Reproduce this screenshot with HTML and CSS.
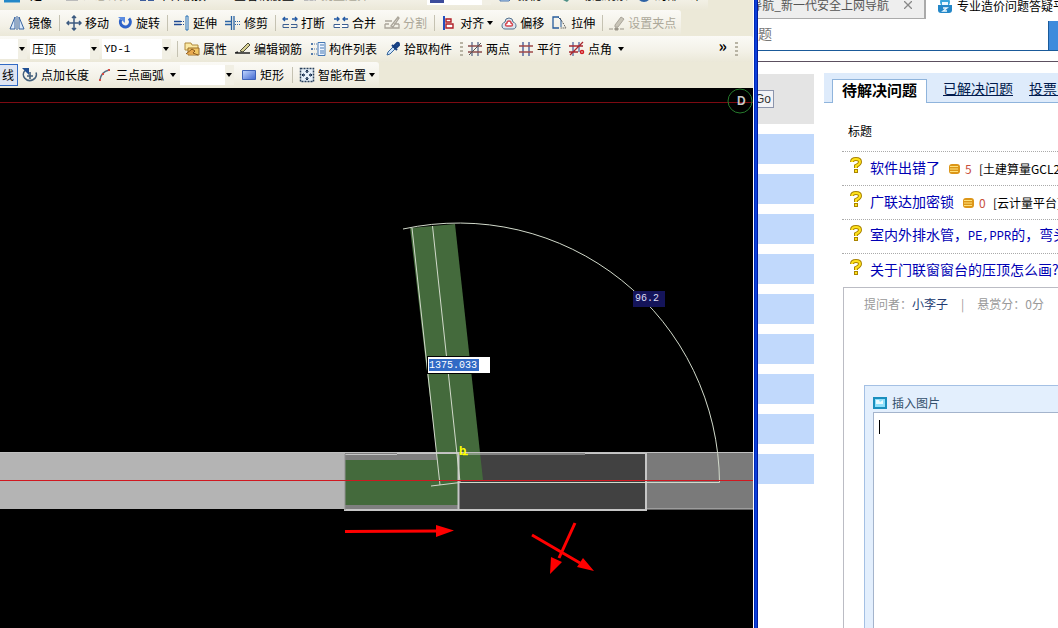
FILE: index.html
```html
<!DOCTYPE html>
<html lang="zh-CN">
<head>
<meta charset="utf-8">
<title>压顶绘制</title>
<link rel="stylesheet" href="styles.css">
</head>
<body>
<div class="desktop">
<main class="cad">
  <header class="toolbars">
    <div class="bar bar-top">
      <div class="band">
        <button class="tool"><svg class="ic" viewBox="0 0 16 16"><rect x="1" y="1" width="14" height="13" fill="#fff" stroke="#2387c8" stroke-width="3"/></svg></button>
        <button class="tool wide">定义</button>
        <button class="tool off"><svg class="ic" viewBox="0 0 16 16"><path d="M2 2h12v12H2z" fill="#bbb"/></svg>汇总计算</button>
        <button class="tool"><svg class="ic" viewBox="0 0 16 16"><path d="M1 3h6v11H1zM9 3h6v11H9z" fill="#3c5c9c"/><path d="M3 6h2v6H3zM11 6h2v6h-2z" fill="#fff"/></svg>平齐板顶</button>
        <button class="tool gapped">查看钢筋量</button>
        <button class="tool off"><svg class="ic" viewBox="0 0 16 16"><path d="M2 2h12v12H2z" fill="#bbb"/><path d="M5 5h2v9M10 5h2v9" stroke="#eee" fill="none"/></svg>批量选择</button>
        <label class="field top-field" aria-label="楼层"><select><option></option></select><span class="swatch"></span></label>
        <button class="tool"><svg class="ic" viewBox="0 0 16 16"><path d="M2 5l4-3h9v8l-4 4H2z" fill="#b7d3f0" stroke="#527ab0"/></svg>俯视</button>
        <button class="tool gapped-s"><svg class="ic" viewBox="0 0 16 16"><path d="M2 13l12-6-8 8z" fill="#4d8f86"/></svg>动态观察</button>
        <button class="tool"><svg class="ic" viewBox="0 0 16 16"><circle cx="8" cy="8" r="6" fill="#9cc4ec" stroke="#2e62a4" stroke-width="2"/></svg>局部三维</button>
      </div>
    </div>

    <div class="bar">
      <div class="band band-edit">
        <button class="tool"><svg class="ic" viewBox="0 0 16 16"><path d="M6 2v12H1zM10 2v12h5z" fill="#dceafa" stroke="#3763a0"/><path d="M8 1v14" stroke="#3763a0"/></svg>镜像</button>
        <i class="sep"></i>
        <button class="tool"><svg class="ic" viewBox="0 0 16 16"><path d="M8 1v14M1 8h14M6 3l2-2 2 2M6 13l2 2 2-2M3 6L1 8l2 2M13 6l2 2-2 2" fill="none" stroke="#3c5a80" stroke-width="1.5"/></svg>移动</button>
        <button class="tool"><svg class="ic" viewBox="0 0 16 16"><path d="M12 3.500a5 5 0 1 1-8 1" fill="none" stroke="#2d62c8" stroke-width="3"/><path d="M1 2h7v6z" fill="#5b8be0"/></svg>旋转</button>
        <i class="sep"></i>
        <button class="tool"><svg class="ic" viewBox="0 0 16 16"><path d="M0 6.500h7M0 9.500h7" stroke="#1f4a94" stroke-width="1.500"/><path d="M7 6.500h4M7 9.500h4" stroke="#1f4a94" stroke-dasharray="1 1"/><path d="M12 1h2v14h-2z" fill="#fff" stroke="#1f6ab0"/></svg>延伸</button>
        <button class="tool"><svg class="ic" viewBox="0 0 16 16"><path d="M0 6.500h6M0 9.500h6M9 1v14M6.500 1v14" stroke="#2b64a4" stroke-width="1.300"/><path d="M10 6.500h6M10 9.500h6" stroke="#2b64a4" stroke-dasharray="1 1"/></svg>修剪</button>
        <i class="sep"></i>
        <button class="tool"><svg class="ic" viewBox="0 0 16 16"><path d="M1 4h5M3 2L1 4l2 2M10 4h5M13 2l2 2-2 2" fill="none" stroke="#245aa4" stroke-width="1.400"/><path d="M6 9.500H1v3h5M10 9.500h5v3h-5M5 9.500h2M9 9.500h2M5 12.500h2M9 12.500h2" fill="none" stroke="#3c5f90"/></svg>打断</button>
        <button class="tool"><svg class="ic" viewBox="0 0 16 16"><path d="M1 4h5M4 2l2 2-2 2M10 4h5M12 2l-2 2 2 2" fill="none" stroke="#245aa4" stroke-width="1.400"/><path d="M7 9.500H1v3h6M9 9.500h6v3H9" fill="#fff" stroke="#3c5f90"/></svg>合并</button>
        <button class="tool off" disabled><svg class="ic" viewBox="0 0 16 16"><path d="M1 6h7M1 9v4h14V9M1 9h4M10 9h5M7 11l7-9 1 1-6 9z" fill="none" stroke="#aaa59a" stroke-width="1.300"/></svg>分割</button>
        <i class="sep"></i>
        <button class="tool"><svg class="ic" viewBox="0 0 16 16"><path d="M2 1h2v14H2z" fill="#2450c0"/><path d="M5 4h5v3H5zM5 9h7v4H5z" fill="#fff" stroke="#b01e26" stroke-width="1.400"/></svg>对齐<svg class="drop" viewBox="0 0 6 4"><path d="M0 0h6L3 4z"/></svg></button>
        <button class="tool"><svg class="ic" viewBox="0 0 16 16"><path d="M4 7a4 4 0 0 1 8 0c4 1 4 7 0 7H4c-4 0-4-6 0-7z" fill="#dce6ef" stroke="#54708c"/><path d="M6 8a2 2 0 0 1 4 0c2 1 2 3 0 3H6c-2 0-2-2 0-3z" fill="#fff" stroke="#d4444c" stroke-width="1.400"/></svg>偏移</button>
        <button class="tool"><svg class="ic" viewBox="0 0 16 16"><path d="M7 2H1v11h6" fill="none" stroke="#275c9c" stroke-width="1.300"/><path d="M6 2l3 3v7" fill="none" stroke="#275c9c"/><path d="M8 3l6 10H8" fill="none" stroke="#333" stroke-dasharray="1 1"/></svg>拉伸</button>
        <i class="sep"></i>
        <button class="tool off" disabled><svg class="ic" viewBox="0 0 16 16"><path d="M6 10l6-8 3 2-6 8H6z" fill="#c9c5b8" stroke="#aaa59a"/><path d="M0 14h4M6 13h3v2H6zM11 14h4" stroke="#999488" fill="#999488"/></svg>设置夹点</button>
      </div>
    </div>

    <div class="bar">
      <div class="band band-full">
        <label class="field field-a"><select aria-label="类别"><option></option></select><svg class="drop" viewBox="0 0 6 4"><path d="M0 0h6L3 4z"/></svg></label>
        <label class="field field-b"><select aria-label="构件类型"><option>压顶</option></select><svg class="drop" viewBox="0 0 6 4"><path d="M0 0h6L3 4z"/></svg></label>
        <label class="field field-b"><select class="code" aria-label="构件名称"><option>YD-1</option></select><svg class="drop" viewBox="0 0 6 4"><path d="M0 0h6L3 4z"/></svg></label>
        <i class="sep"></i>
        <button class="tool"><svg class="ic" viewBox="0 0 16 16"><path d="M1 2h6l1 2h6v5H1z" fill="#fbe9a4" stroke="#b08a3c"/><path d="M4 7h11v7H4z" fill="#f2c766" stroke="#9a6f2c"/><path d="M2 13l6-5 3 2-2 2 5 2" fill="#e8a850" stroke="#8a5a20"/></svg>属性</button>
        <button class="tool"><svg class="ic" viewBox="0 0 16 16"><path d="M1 12h14M0 12l3-1" stroke="#222" stroke-width="1.500"/><path d="M5 10l8-8 2 2-7 7z" fill="#d6cf92" stroke="#4d4d3a"/></svg>编辑钢筋</button>
        <button class="tool"><svg class="ic" viewBox="0 0 16 16"><path d="M1 2h2v2H1zM1 7h2v2H1zM1 12h2v2H1z" fill="#567dac"/><path d="M4 3h3M4 8h3M4 13h3" stroke="#567dac" stroke-dasharray="1 1"/><path d="M8 1.500h7v13H8z" fill="#eef5ff" stroke="#4478b4"/><path d="M10 4h4M10 7h4M10 10h4M10 12h4" stroke="#4478b4"/></svg>构件列表</button>
        <button class="tool pick"><svg class="ic" viewBox="0 0 16 16"><path d="M2 14l1-3 5-5 2 2-5 5z" fill="#cfe4fb" stroke="#37679c"/><path d="M7 4l5 5M9 5l3-3q2-1 2 2l-3 3z" fill="#1c4f9c" stroke="#173f80" stroke-width="2"/></svg>拾取构件</button>
        <i class="grip"></i>
        <button class="tool"><svg class="ic" viewBox="0 0 16 16"><path d="M5 1v14M11 1v14" stroke="#5b6a8c" stroke-width="1.300"/><path d="M1 5h14M1 11h14" stroke="#8c4b4b" stroke-width="1.300"/><path d="M2 14L14 2" stroke="#555"/></svg>两点</button>
        <button class="tool"><svg class="ic" viewBox="0 0 16 16"><path d="M5 1v14M11 1v14" stroke="#5468a0" stroke-width="1.500"/><path d="M1 5h14M1 11h14" stroke="#a04848" stroke-width="1.300"/></svg>平行</button>
        <button class="tool"><svg class="ic" viewBox="0 0 16 16"><path d="M4 1v14M10 1v10" stroke="#5468a0" stroke-width="1.300"/><path d="M0 5h14M0 11h9M1 14L14 1" stroke="#a82830" stroke-width="1.300"/><circle cx="13" cy="11" r="1.500" fill="none" stroke="#d01820" stroke-width="1.500"/></svg>点角<svg class="drop far" viewBox="0 0 6 4"><path d="M0 0h6L3 4z"/></svg></button>
        <button class="more" aria-label="更多">»</button>
        <i class="grip"></i>
      </div>
    </div>

    <div class="bar">
      <div class="band band-draw">
        <button class="tool active">线</button>
        <button class="tool"><svg class="ic" viewBox="0 0 16 16"><path d="M3 3.500a6.500 6 0 1 0 11 2M8 5v7M5 9h6" fill="none" stroke="#44607c" stroke-width="1.600"/><path d="M0 1h7v7z" fill="#204f94"/></svg>点加长度</button>
        <button class="tool"><svg class="ic" viewBox="0 0 16 16"><path d="M3 13Q4 5 12 3" fill="none" stroke="#576b80" stroke-width="1.500"/><path d="M2 12h2v2H2zM5 6h2v2H5zM11 2h2v2h-2z" fill="#d44b44"/></svg>三点画弧<svg class="drop far" viewBox="0 0 6 4"><path d="M0 0h6L3 4z"/></svg></button>
        <label class="field field-c"><select aria-label="画弧方式"><option></option></select><svg class="drop" viewBox="0 0 6 4"><path d="M0 0h6L3 4z"/></svg></label>
        <button class="tool"><svg class="ic" viewBox="0 0 16 16"><defs><linearGradient id="rg" x2="1" y2="1"><stop stop-color="#c3d8ff"/><stop offset="1" stop-color="#4067d0"/></linearGradient></defs><path d="M1.500 3.500h13v9h-13z" fill="url(#rg)" stroke="#3f63b8"/></svg>矩形</button>
        <i class="sep wide-sep"></i>
        <button class="tool"><svg class="ic" viewBox="0 0 16 16"><path d="M1.500 1.500h13v13h-13z" fill="#e6f0fa" stroke="#28405c" stroke-width="1.500" stroke-dasharray="2 1"/><path d="M8 4v2M8 10v2M4 8h2M10 8h2" stroke="#152c4c" stroke-width="1.500"/><path d="M6.500 4.500L8 3l1.500 1.500M6.500 11.500L8 13l1.500-1.500M4.500 6.500L3 8l1.500 1.500M11.500 6.500L13 8l-1.500 1.500" fill="none" stroke="#152c4c"/></svg>智能布置<svg class="drop" viewBox="0 0 6 4"><path d="M0 0h6L3 4z"/></svg></button>
      </div>
    </div>
  </header>

  <section class="canvas">
    <svg class="drawing" aria-label="墙体与压顶">
      <g transform="translate(0 -88)">
        <path d="M0 102.500h753" stroke="#7c0a12"/>
        <rect x="0" y="452" width="345" height="57" fill="#b4b4b4"/>
        <rect x="646" y="453" width="120" height="56" fill="#7a7a7a"/>
        <rect x="345" y="453" width="113" height="57" fill="#7f7f7f"/>
        <rect x="345" y="460" width="113" height="45" fill="#446a3c"/>
        <rect x="458" y="453" width="188" height="57" fill="#414141"/>
        <path d="M410 228L455 224 483 480 440 482z" fill="#446a3c"/>
        <path d="M0 452.500h753M646 509h107" stroke="#c0c0c0" fill="none"/>
        <path d="M345 454.500h52M397 453.500h61M458 454h127M585 453.500h61" stroke="#c6c6c6" fill="none"/>
        <path d="M344 510h302V453M458.500 453v57" stroke="#c6c6c6" stroke-width="2" fill="none"/>
        <path d="M345 454v56" stroke="#909090"/>
        <g fill="none" stroke="#d2dacb">
          <path d="M412 228L440 485M432.500 226L460 482M431 486L460 482.500H719.500"/>
          <path d="M403 229A261 261 0 0 1 719.500 482.500"/>
        </g>
        <path d="M0 480.500h753" stroke="#d01820"/>
        <text class="node-mark" x="459" y="455">b</text>
        <path d="M463 454.500h5" stroke="#ffff00" stroke-width="1.500"/>
        <g stroke="#ff0000" stroke-width="3" fill="#ff0000">
          <path d="M345 531.500L438 531M575 523L559 558M532 535L580 563"/>
          <path d="M436 525L454 530.500 436 537zM551 557L562 562 550 574zM583 558L594 571 577 567z" stroke="none"/>
        </g>
        <circle cx="740" cy="101" r="12" fill="none" stroke="#267a2c"/>
        <text class="compass" x="737" y="105">D</text>
      </g>
    </svg>
    <output class="angle">96.2</output>
    <input class="length" type="text" value="1375.033" aria-label="长度">
  </section>
</main>

<aside class="browser">
  <nav class="tabs">
    <button class="tab"><span class="tab-title">导航_新一代安全上网导航</span><svg class="close" viewBox="0 0 8 8"><path d="M0 0l8 8M8 0L0 8" stroke="#888" stroke-width="1.300"/></svg></button>
    <button class="tab current"><svg class="ic" viewBox="0 0 16 16"><circle cx="8" cy="5" r="5" fill="#37a5dc"/><path d="M1 8h14v5q0 3-3 3H4q-3 0-3-3z" fill="#2387c8"/><path d="M5 5h6v3H5z" fill="#e8f7ff"/><path d="M6 11h4l-4 3h4" fill="none" stroke="#e8f7ff" stroke-width="1.300"/></svg>专业造价问题答疑平台</button>
  </nav>
  <form class="search"><input type="text" value="题" aria-label="搜索"><button type="button" aria-label="搜索按钮"></button></form>
  <div class="rule"></div>
  <div class="page">
    <div class="side">
      <div class="go"><button>Go</button></div>
      <div class="block"></div><div class="block"></div><div class="block"></div>
      <div class="block"></div><div class="block"></div><div class="block"></div>
      <div class="block"></div><div class="block"></div><div class="block"></div>
    </div>
    <div class="content">
      <div class="topics"><strong>待解决问题</strong><a href="#solved">已解决问题</a><a href="#vote">投票中的问题</a></div>
      <h2 class="caption">标题</h2>
      <ul class="questions">
        <li><svg class="q" viewBox="0 0 12 17"><path d="M2 5q0-3 4-3t4 3q0 2-4 4v2" fill="none" stroke="#a98300" stroke-width="4"/><path d="M4 12h4v4H4z" fill="#a98300"/><path d="M2 5q0-3 4-3t4 3q0 2-4 4v2M6 13v2" fill="none" stroke="#ffe21c" stroke-width="2"/></svg><a href="#q1">软件出错了</a><svg class="coin" viewBox="0 0 11 10"><rect width="11" height="10" rx="3" fill="#dc9618"/><path d="M1 2.500h8M1 5h8M1 7.500h8" stroke="#ffe27a"/></svg><b>5</b><span>[土建算量GCL2013]</span></li>
        <li><svg class="q" viewBox="0 0 12 17"><path d="M2 5q0-3 4-3t4 3q0 2-4 4v2" fill="none" stroke="#a98300" stroke-width="4"/><path d="M4 12h4v4H4z" fill="#a98300"/><path d="M2 5q0-3 4-3t4 3q0 2-4 4v2M6 13v2" fill="none" stroke="#ffe21c" stroke-width="2"/></svg><a href="#q2">广联达加密锁</a><svg class="coin" viewBox="0 0 11 10"><rect width="11" height="10" rx="3" fill="#dc9618"/><path d="M1 2.500h8M1 5h8M1 7.500h8" stroke="#ffe27a"/></svg><b>0</b><span>[云计量平台]</span></li>
        <li><svg class="q" viewBox="0 0 12 17"><path d="M2 5q0-3 4-3t4 3q0 2-4 4v2" fill="none" stroke="#a98300" stroke-width="4"/><path d="M4 12h4v4H4z" fill="#a98300"/><path d="M2 5q0-3 4-3t4 3q0 2-4 4v2M6 13v2" fill="none" stroke="#ffe21c" stroke-width="2"/></svg><a href="#q3">室内外排水管，<code>PE,PPR</code>的，弯头</a></li>
        <li><svg class="q" viewBox="0 0 12 17"><path d="M2 5q0-3 4-3t4 3q0 2-4 4v2" fill="none" stroke="#a98300" stroke-width="4"/><path d="M4 12h4v4H4z" fill="#a98300"/><path d="M2 5q0-3 4-3t4 3q0 2-4 4v2M6 13v2" fill="none" stroke="#ffe21c" stroke-width="2"/></svg><a href="#q4">关于门联窗窗台的压顶怎么画?</a></li>
      </ul>
      <div class="detail">
        <p class="meta"><span>提问者：<a href="#user">小李子</a></span><span>|</span><span>悬赏分：0分</span></p>
        <div class="editor">
          <button class="insert"><svg class="pic" viewBox="0 0 14 12"><path d="M1 1h12v10H1z" fill="#8fe0fb" stroke="#1b8fbe" stroke-width="2"/><path d="M3 3h3l1 2 3-2v4H3z" fill="#eafaff"/></svg>插入图片</button>
          <div class="entry"><textarea aria-label="回答"></textarea><i class="caret"></i></div>
        </div>
      </div>
    </div>
  </div>
</aside>
</div>
</body>
</html>
```
FILE: styles.css
```css
* { box-sizing: border-box; }
body {
  margin: 0;
  font: 12px/16px "Noto Sans CJK SC", sans-serif;
  color: #000;
  overflow: hidden;
}
button, input, select, textarea {
  font: inherit;
  color: inherit;
  border: 0;
  padding: 0;
  margin: 0;
  background: none;
  border-radius: 0;
}
.desktop {
  display: grid;
  grid-template-columns: minmax(0, 758fr) minmax(0, 300fr);
  height: 100vh;
}

/* CAD window */
.cad {
  display: flex;
  flex-direction: column;
  min-width: 0;
  position: relative;
  padding-right: 5px;
  background: linear-gradient(to left, #001a9c 1px, #0a3fd8 1px, #0a3fd8 3px, #0028b8 3px, #0028b8 4px, #fff 4px, #fff 5px, transparent 5px);
}
.toolbars { background: #ece9d8; overflow: hidden; }
.bar { height: 26px; display: flex; }
.bar-top { height: 28px; margin-top: -18px; }
.band {
  display: flex;
  align-items: center;
  padding: 0 1px 0 5px;
  background: linear-gradient(#fbfaf6, #f3f1e7 60%, #ebe8d8);
  white-space: nowrap;
  border-radius: 0 3px 3px 0;
}
.bar-top .band { padding: 0 0 2px; width: 94%; }
.band-full { width: 100%; padding: 0; }
.band-draw { padding: 0; }
.tool {
  display: flex;
  align-items: center;
  gap: 3px;
  padding: 0 4px;
  height: 22px;
  flex: none;
}
.tool.off { color: #aca899; }
.tool.wide { padding: 0 6px; }
.tool.gapped { padding: 0 4px 0 24px; }
.tool.gapped-s { margin-left: 12px; }
.tool.pick { padding-right: 8px; }
.tool.active {
  width: 18px;
  padding: 0 3px 0 2px;
  border: 1px solid #316ac5;
  border-left: 0;
  background: #dfe5f2;
}
.ic { width: 16px; height: 16px; flex: none; }
.drop { width: 6px; height: 4px; flex: none; }
.drop.far { margin-left: 3px; }
.sep { width: 1px; height: 16px; margin: 0 2px 0 3px; background: #c5c2b2; flex: none; }
.wide-sep { margin: 0 2px 0 4px; }
.grip { width: 3px; height: 14px; flex: none; background: repeating-linear-gradient(#b8b4a4 0 2px, transparent 2px 4px); }
.more { margin-left: auto; margin-right: 8px; padding-bottom: 8px; font-size: 16px; font-weight: bold; }
.band-full .grip:last-child { margin-right: 15px; }
.field {
  display: flex;
  align-items: center;
  height: 20px;
  background: linear-gradient(to left, #f1efe4 9px, #fff 9px);
  padding-right: 2px;
  margin-right: 3px;
  flex: none;
}
.field select { appearance: none; flex: 1; min-width: 0; height: 18px; padding-left: 2px; }
.field-a { width: 27px; }
.field-b { width: 69px; }
.field-c { width: 54px; margin: 0 3px 0 0; }
.code { font-family: "Liberation Mono", monospace; font-size: 11px; }
.top-field { width: 64px; margin-left: 54px; }
.swatch { width: 14px; height: 16px; background: #3c4c9c; order: -1; margin-left: 3px; }

.canvas { flex: 1; position: relative; background: #000; overflow: hidden; min-height: 0; }
.drawing { display: block; width: 100%; height: 100%; }
.node-mark { font: bold 12px "Liberation Sans", sans-serif; fill: #ffff00; }
.compass { font: bold 12px "Liberation Sans", sans-serif; fill: #c8c8c8; }
.angle, .length { position: absolute; font: 10px/14px "Liberation Mono", monospace; }
.angle { left: 633px; top: 203px; width: 32px; height: 16px; padding: 1px 0 0 2px; background: #14145a; color: #dcdcf4; }
.length {
  left: 427px;
  top: 268px;
  width: 64px;
  height: 18px;
  border: 1px solid #000;
  padding: 0 1px;
  color: #fff;
  background: linear-gradient(#316ac5, #316ac5) 1px 2px / 50px 12px no-repeat #fff;
}

/* Browser window */
.browser { background: #fff; display: flex; flex-direction: column; overflow: hidden; min-width: 0; white-space: nowrap; }
.tabs { display: flex; height: 27px; margin-top: -8px; flex: none; }
.tab { display: flex; align-items: center; flex: none; }
.tab:first-child {
  width: 168px;
  overflow: hidden;
  background: #eee;
  color: #555;
  border-right: 2px solid #aaa;
  border-bottom: 1px solid #aaa;
  justify-content: flex-end;
  gap: 15px;
  padding-right: 12px;
}
.close { width: 8px; height: 8px; flex: none; }
.tab.current { padding-left: 11px; gap: 4px; }
.tab.current .ic { margin-top: -2px; }
.search { display: flex; height: 32px; border-bottom: 1px solid #1a5a9a; flex: none; padding-top: 2px; }
.search input { flex: 1; min-width: 0; font-size: 14px; color: #777; padding-bottom: 6px; }
.search button { width: 10px; background: #3f8bdc; border-left: 1px solid #1a5a9a; }
.rule { height: 11px; border-bottom: 1px solid #5c5060; flex: none; }
.page { display: flex; flex: 1; min-height: 0; gap: 10px; padding-top: 12px; }
.side { width: 56px; flex: none; }
.go { height: 50px; background: #e4e4e4; padding-top: 16px; margin-bottom: 10px; }
.go button { height: 18px; width: 16px; padding-right: 2px; border: 1px solid #8c95ac; border-left: 0; background: #f3f3f6; color: #333; display: flex; justify-content: flex-end; align-items: center; font-family: "Liberation Sans", sans-serif; }
.block { height: 30px; background: #c1d9fc; margin-bottom: 10px; }
.content { flex: 1; min-width: 0; display: flex; flex-direction: column; }
.topics {
  display: flex;
  align-items: flex-end;
  height: 30px;
  margin-top: -1px;
  padding-left: 8px;
  gap: 16px;
  background: #deebfb;
  border-bottom: 1px solid #8fb4dc;
  font-size: 14px;
  flex: none;
}
.topics strong { font-size: 15px; height: 24px; padding: 0 9px; background: #fff; border: 1px solid #8fb4dc; border-bottom: 0; margin-bottom: -1px; line-height: 20px; }
.topics a { color: #001a4d; line-height: 28px; }
.caption { margin: 0; padding: 20px 0 12px 24px; font-size: 12px; font-weight: normal; line-height: 16px; }
.questions { list-style: none; margin: 0 0 0 18px; padding: 0; }
.questions li { height: 34px; border-top: 1px dotted #aaa; display: flex; align-items: center; padding-left: 8px; }
.questions a { color: #0000b4; font-size: 14px; text-decoration: none; padding-bottom: 4px; }
.questions code { font: 12px "Liberation Mono", monospace; }
.questions b { font-weight: normal; color: #c8503c; width: 14px; flex: none; }
.q { width: 12px; height: 17px; margin: 0 8px 6px 0; flex: none; }
.coin { width: 11px; height: 10px; margin: 0 5px 0 9px; flex: none; }
.questions a, .questions span { flex: none; }
.detail { flex: 1; margin-left: 19px; border: solid #bbbcc4; border-width: 1px 0 0 1px; padding: 8px 0 0 20px; display: flex; flex-direction: column; min-height: 0; }
.meta { margin: 0 0 73px; color: #999; display: flex; gap: 13px; }
.meta a { color: #223a70; text-decoration: none; }
.editor { flex: 1; display: flex; flex-direction: column; border: solid #a4c0e4; border-width: 1px 0 0 1px; background: #e3effd; padding: 8px 0 0 8px; }
.insert { display: flex; align-items: center; gap: 5px; height: 18px; color: #34506c; }
.pic { width: 14px; height: 12px; }
.entry { flex: 1; position: relative; display: flex; }
.entry textarea { flex: 1; min-width: 0; resize: none; background: #fff; border: solid #a4b4cc; border-width: 1px 0 0 1px; padding: 6px; }
.caret { position: absolute; left: 6px; top: 8px; width: 1px; height: 14px; background: #000; }
```
